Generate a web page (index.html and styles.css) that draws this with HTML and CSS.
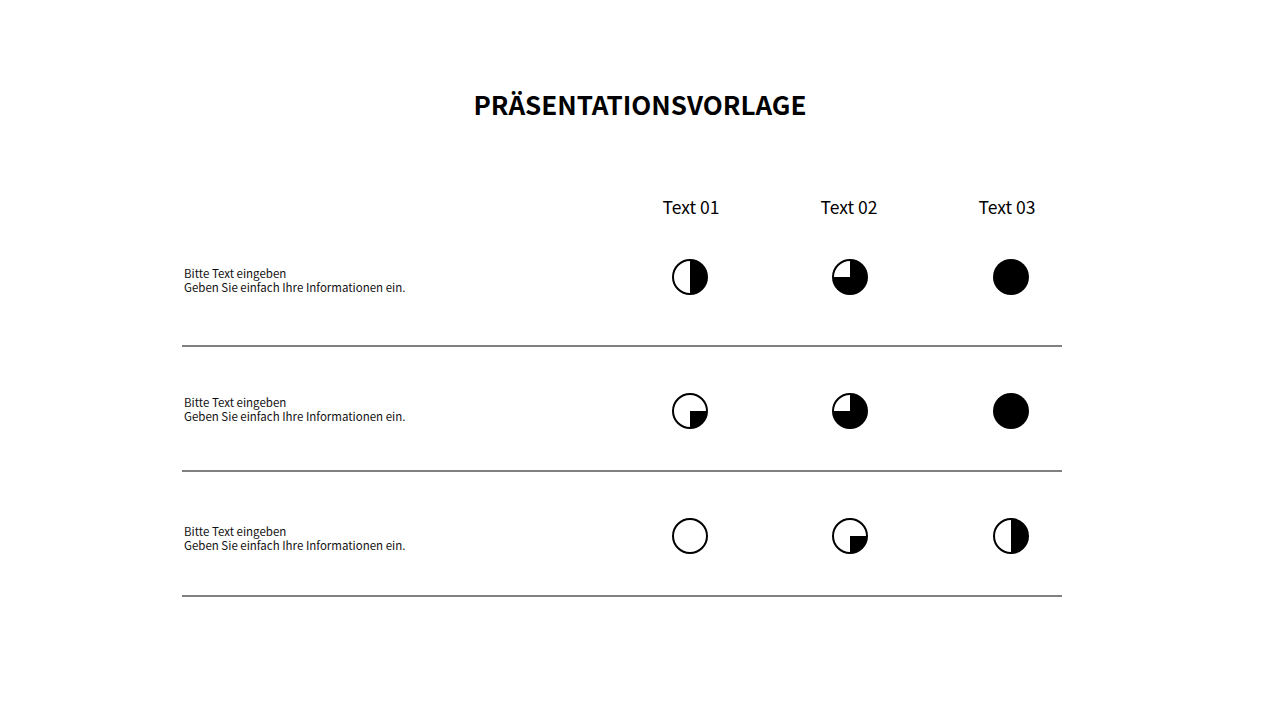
FILE: index.html
```html
<!DOCTYPE html>
<html lang="de">
<head>
<meta charset="utf-8">
<title>Präsentationsvorlage</title>
<link rel="stylesheet" href="styles.css">
</head>
<body>
<h1 class="title">PRÄSENTATIONSVORLAGE</h1>
<div class="table">
  <div class="head">
    <span></span>
    <span class="col-head">Text 01</span>
    <span class="col-head">Text 02</span>
    <span class="col-head">Text 03</span>
  </div>
  <div class="row row-first">
    <p class="desc">Bitte Text eingeben<br>Geben Sie einfach Ihre Informationen ein.</p>
    <div class="cell"><svg class="pie" viewBox="0 0 36 36"><circle cx="18" cy="18" r="17" class="ring"/><path d="M18 1 A17 17 0 0 1 18 35 Z" class="fill"/><circle cx="18" cy="18" r="17" class="edge"/></svg></div>
    <div class="cell"><svg class="pie" viewBox="0 0 36 36"><circle cx="18" cy="18" r="17" class="ring"/><path d="M18 18 L18 1 A17 17 0 1 1 1 18 Z" class="fill"/><circle cx="18" cy="18" r="17" class="edge"/></svg></div>
    <div class="cell"><svg class="pie" viewBox="0 0 36 36"><circle cx="18" cy="18" r="18" class="full"/></svg></div>
  </div>
  <div class="row">
    <p class="desc">Bitte Text eingeben<br>Geben Sie einfach Ihre Informationen ein.</p>
    <div class="cell"><svg class="pie" viewBox="0 0 36 36"><circle cx="18" cy="18" r="17" class="ring"/><path d="M18 18 L35 18 A17 17 0 0 1 18 35 Z" class="fill"/><circle cx="18" cy="18" r="17" class="edge"/></svg></div>
    <div class="cell"><svg class="pie" viewBox="0 0 36 36"><circle cx="18" cy="18" r="17" class="ring"/><path d="M18 18 L18 1 A17 17 0 1 1 1 18 Z" class="fill"/><circle cx="18" cy="18" r="17" class="edge"/></svg></div>
    <div class="cell"><svg class="pie" viewBox="0 0 36 36"><circle cx="18" cy="18" r="18" class="full"/></svg></div>
  </div>
  <div class="row row-last">
    <p class="desc">Bitte Text eingeben<br>Geben Sie einfach Ihre Informationen ein.</p>
    <div class="cell"><svg class="pie" viewBox="0 0 36 36"><circle cx="18" cy="18" r="17" class="ring"/><circle cx="18" cy="18" r="17" class="edge"/></svg></div>
    <div class="cell"><svg class="pie" viewBox="0 0 36 36"><circle cx="18" cy="18" r="17" class="ring"/><path d="M18 18 L35 18 A17 17 0 0 1 18 35 Z" class="fill"/><circle cx="18" cy="18" r="17" class="edge"/></svg></div>
    <div class="cell"><svg class="pie" viewBox="0 0 36 36"><circle cx="18" cy="18" r="17" class="ring"/><path d="M18 1 A17 17 0 0 1 18 35 Z" class="fill"/><circle cx="18" cy="18" r="17" class="edge"/></svg></div>
  </div>
</div>
</body>
</html>
```
FILE: styles.css
```css
html, body {
  margin: 0;
  padding: 0;
  background: #ffffff;
}
body {
  width: 1280px;
  height: 720px;
  overflow: hidden;
  font-family: "Noto Sans CJK SC", "Noto Sans", sans-serif;
  color: #000000;
}
.title {
  margin: 0;
  padding-top: 86px;
  padding-bottom: 1px;
  font-size: 26px;
  line-height: 36px;
  font-weight: 700;
  text-align: center;
}
.table {
  width: 880px;
  margin-left: 182px;
}
.head,
.row {
  display: grid;
  grid-template-columns: 384px 72px 72px 72px;
  column-gap: 88px;
  align-items: center;
}
.head {
  grid-template-columns: 387px 72px 72px 72px;
  column-gap: 86px;
  margin-top: 69px;
  height: 30px;
}
.col-head {
  font-size: 17.5px;
  line-height: 30px;
  text-align: center;
  white-space: nowrap;
}
.row {
  height: 123px;
  box-sizing: content-box;
  border-bottom: 2px solid #808080;
}
.row > * {
  margin-top: 5px;
}
.row-first > * {
  margin-top: -14px;
}
.row-first > .desc {
  margin-top: -8px;
}
.row-last > .desc {
  margin-top: 9px;
}
.desc {
  margin: 0;
  padding-left: 2px;
  font-size: 11.5px;
  line-height: 14px;
  color: #111111;
  white-space: nowrap;
}
.cell {
  display: flex;
  justify-content: center;
  align-items: center;
}
.cell:last-child {
  padding-left: 2px;
}
.pie {
  width: 36px;
  height: 36px;
  display: block;
}
.ring {
  fill: #ffffff;
}
.fill {
  fill: #000000;
}
.edge {
  fill: none;
  stroke: #000000;
  stroke-width: 2;
}
.full {
  fill: #000000;
}
```
